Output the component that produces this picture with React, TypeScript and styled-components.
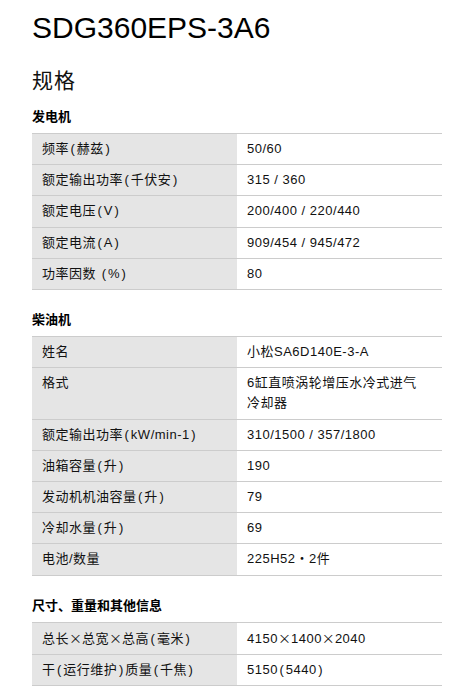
import styled, { createGlobalStyle } from 'styled-components';

const GlobalStyle = createGlobalStyle`
  body {
    margin: 0;
    background: #ffffff;
    color: #111111;
    font-family: "Liberation Sans", "Noto Sans CJK SC", sans-serif;
  }
`;

const Page = styled.div`
  width: 410px;
  padding: 10px 24px 0 32px;
`;

const Title = styled.h1`
  margin: 0;
  font-family: "Liberation Sans", sans-serif;
  font-size: 30px;
  line-height: 36px;
  font-weight: 400;
  color: #000;
`;

const SubTitle = styled.h2`
  margin: 19px 0 0;
  font-family: "Noto Sans CJK SC", sans-serif;
  font-size: 21px;
  line-height: 28px;
  font-weight: 400;
  letter-spacing: 1px;
  color: #111;
`;

const SectionTitle = styled.h3`
  margin: 14px 0 0;
  font-family: "Noto Sans CJK SC", sans-serif;
  font-size: 13px;
  line-height: 18px;
  font-weight: 700;
  color: #000;
`;

const Section = styled.section`
  & + & {
    margin-top: 20px;
  }
  & + & > h3 {
    margin-top: 0;
  }
`;

const SpecTable = styled.div`
  margin-top: 8px;
  border-bottom: 1px solid #cccccc;
`;

const Row = styled.div`
  display: grid;
  grid-template-columns: 205px 205px;
  border-top: 1px solid #cccccc;
`;

const Cell = styled.div<{ $label?: boolean }>`
  padding: 5px ${(p) => (p.$label ? '8px' : '14px')} 5px 10px;
  font-size: 13px;
  line-height: 20.2px;
  letter-spacing: 0.5px;
  background: ${(p) => (p.$label ? '#e5e5e5' : '#ffffff')};
  color: #111;
`;

const Times = styled.span`
  font-family: "Noto Sans CJK SC", sans-serif;
  letter-spacing: 0;
`;

const Paren = styled.span`
  padding: 0 1.5px;
`;

const format = (text: string) =>
  text.split(/([×()])/).map((part, i) => {
    if (part === '×') return <Times key={i}>×</Times>;
    if (part === '(' || part === ')') return <Paren key={i}>{part}</Paren>;
    return part;
  });

type Spec = [string, string];

const sections: { title: string; rows: Spec[] }[] = [
  {
    title: '发电机',
    rows: [
      ['频率(赫兹)', '50/60'],
      ['额定输出功率(千伏安)', '315 / 360'],
      ['额定电压(V)', '200/400 / 220/440'],
      ['额定电流(A)', '909/454 / 945/472'],
      ['功率因数 (%)', '80'],
    ],
  },
  {
    title: '柴油机',
    rows: [
      ['姓名', '小松SA6D140E-3-A'],
      ['格式', '6缸直喷涡轮增压水冷式进气冷却器'],
      ['额定输出功率(kW/min-1)', '310/1500 / 357/1800'],
      ['油箱容量(升)', '190'],
      ['发动机机油容量(升)', '79'],
      ['冷却水量(升)', '69'],
      ['电池/数量', '225H52・2件'],
    ],
  },
  {
    title: '尺寸、重量和其他信息',
    rows: [
      ['总长×总宽×总高(毫米)', '4150×1400×2040'],
      ['干(运行维护)质量(千焦)', '5150(5440)'],
    ],
  },
];

export default function App() {
  return (
    <>
      <GlobalStyle />
      <Page>
        <Title>SDG360EPS-3A6</Title>
        <SubTitle>规格</SubTitle>
        {sections.map((s) => (
          <Section key={s.title}>
            <SectionTitle>{s.title}</SectionTitle>
            <SpecTable>
              {s.rows.map(([label, value]) => (
                <Row key={label}>
                  <Cell $label>{format(label)}</Cell>
                  <Cell>{format(value)}</Cell>
                </Row>
              ))}
            </SpecTable>
          </Section>
        ))}
      </Page>
    </>
  );
}
